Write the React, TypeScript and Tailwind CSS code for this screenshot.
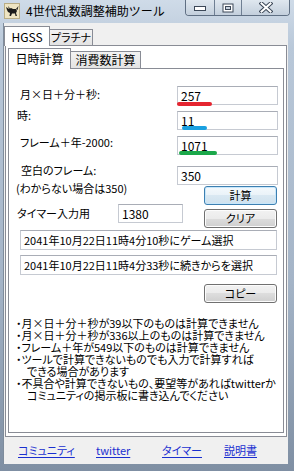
import React from "react";

const font = "font-['Noto_Sans_CJK_JP','Noto_Sans',sans-serif]";
const palt = "[font-feature-settings:'palt']";

function TextBox({ value, small = false, className = "" }: { value: string; small?: boolean; className?: string }) {
  return (
    <div
      className={`flex h-[19px] items-center whitespace-nowrap border border-[#c6cad2] border-t-[#a9adb6] bg-white pl-[3px] leading-none text-black ${
        small ? "text-[11px]" : "text-[12px]"
      } ${className}`}
    >
      {value}
    </div>
  );
}

function Btn({ label, primary = false, className = "" }: { label: string; primary?: boolean; className?: string }) {
  return (
    <div
      className={`flex h-[19px] w-[73px] items-center justify-center rounded-[3px] border text-[11px] leading-none text-black ${palt} ${
        primary
          ? "border-[#3c7fb1] bg-[linear-gradient(#f4f9fc_0%,#e9f2f8_50%,#d9e8f2_50%,#cfe1ee_100%)] shadow-[inset_0_0_0_1px_#c7e6fa]"
          : "border-[#707070] bg-[linear-gradient(#f2f2f2_0%,#ebebeb_50%,#dddddd_50%,#cfcfcf_100%)] shadow-[inset_0_0_0_1px_#fcfcfc]"
      } ${className}`}
    >
      {label}
    </div>
  );
}

function Underline({ color, className }: { color: string; className: string }) {
  return <div className={`absolute h-[4px] rounded-full ${color} ${className}`} />;
}

function AppIcon() {
  return (
    <svg width="16" height="16" viewBox="0 0 16 16">
      <rect x="0.5" y="0.5" width="15" height="15" fill="#eee4c2" stroke="#b9ad86" />
      <path
        d="M2 4 L5 6 L7 5 L9 6 L12 6 L13 8 L12 10 L13 13 L11.5 13 L11 10.5 L8 10.5 L7 13 L5.5 13 L6 10 L4 9 L3 7 Z"
        fill="#1b1b1b"
      />
      <path d="M4 3 L6 5.5 L5 6 Z" fill="#1b1b1b" />
      <path d="M12 6 L14.5 3 L13.5 7 Z" fill="#1b1b1b" />
    </svg>
  );
}

function CaptionButtons() {
  return (
    <div className="mr-[4px] flex h-[16px] self-start overflow-hidden rounded-b-[4px] border border-t-0 border-[#5f6f83] shadow-[inset_0_0_0_1px_rgba(255,255,255,0.45)]">
      <div className="flex w-[29px] items-center justify-center border-r border-[#6f7f93] bg-[linear-gradient(#dfe7ef,#c3cfdc)]">
        <svg width="12" height="6" viewBox="0 0 12 6">
          <rect x="0.5" y="1.5" width="11" height="4" fill="#fff" stroke="#3c4858" />
        </svg>
      </div>
      <div className="flex w-[27px] items-center justify-center border-r border-[#6f7f93] bg-[linear-gradient(#dfe7ef,#c3cfdc)]">
        <svg width="12" height="10" viewBox="0 0 12 10">
          <rect x="0.5" y="0.5" width="11" height="9" fill="#3c4858" />
          <rect x="1.5" y="1.5" width="9" height="7" fill="#fff" />
          <rect x="3.5" y="3.5" width="5" height="3" fill="#c9d3df" stroke="#3c4858" />
        </svg>
      </div>
      <div className="flex w-[47px] items-center justify-center bg-[linear-gradient(#dfe7ef,#c3cfdc)]">
        <svg width="14" height="11" viewBox="0 0 14 11">
          <path d="M2.5 1.5 L11.5 9.5 M11.5 1.5 L2.5 9.5" stroke="#3c4858" strokeWidth="4" strokeLinecap="square" />
          <path d="M2.5 1.5 L11.5 9.5 M11.5 1.5 L2.5 9.5" stroke="#fff" strokeWidth="2" strokeLinecap="square" />
        </svg>
      </div>
    </div>
  );
}

const notes: { text: string; indent?: boolean }[] = [
  { text: "・月×日＋分＋秒が39以下のものは計算できません" },
  { text: "・月×日＋分＋秒が336以上のものは計算できません" },
  { text: "・フレーム＋年が549以下のものは計算できません" },
  { text: "・ツールで計算できないものでも入力で計算すれば" },
  { text: "できる場合があります", indent: true },
  { text: "・不具合や計算できないもの、要望等があればtwitterか" },
  { text: "コミュニティの掲示板に書き込んでください", indent: true },
];

export default function App() {
  return (
    <div
      className={`flex h-[471px] w-[294px] flex-col overflow-hidden bg-[linear-gradient(180deg,#cfdbe8_0%,#b9c8d9_10%,#a4b4c7_60%,#7f8fa3_100%)] ${font}`}
    >
      {/* title bar */}
      <div className="flex h-[23px] shrink-0 items-start">
        <div className="ml-[4px] mt-[3px]">
          <AppIcon />
        </div>
        <div className="ml-[6px] mt-[3px] text-[12px] leading-[16px] text-black">4世代乱数調整補助ツール</div>
        <div className="ml-auto flex">
          <CaptionButtons />
        </div>
      </div>

      {/* client area */}
      <div className="mb-[7px] ml-[3px] mr-[6px] flex flex-1 flex-col border-l border-[#7e8c9c] bg-[#f0f0f0]">
        {/* outer tabs */}
        <div className="flex h-[22px] items-end">
          <div className="z-10 -mb-px flex h-[20px] w-[46px] items-center justify-center border border-b-0 border-[#898c95] bg-white text-[12px] leading-none text-black">
            HGSS
          </div>
          <div
            className={`flex h-[16px] w-[43px] items-center justify-center border border-b-0 border-l-0 border-[#898c95] bg-[linear-gradient(#f3f3f3,#e3e3e3)] text-[11px] leading-none text-black ${palt}`}
          >
            プラチナ
          </div>
        </div>

        {/* outer panel */}
        <div className="ml-px mr-[1px] flex h-[392px] flex-col border border-[#898c95] bg-white px-[2px] pb-[3px]">
          {/* inner tabs */}
          <div className="flex h-[22px] items-end">
            <div className="z-10 -mb-px flex h-[21px] w-[63px] items-center justify-center border border-b-0 border-[#898c95] bg-white text-[12px] leading-none text-black">
              日時計算
            </div>
            <div className="flex h-[17px] w-[70px] items-center justify-center border border-b-0 border-l-0 border-[#898c95] bg-[linear-gradient(#f3f3f3,#e3e3e3)] text-[12px] leading-none text-black">
              消費数計算
            </div>
          </div>

          {/* inner panel */}
          <div className={`flex flex-1 flex-col border border-[#898c95] bg-white pr-[5px] pt-[17px] text-[11px] leading-[14px] text-black ${palt}`}>
            <div className="flex items-start">
              <div className="ml-[11px] mt-[1px]">月×日＋分＋秒:</div>
              <div className="relative ml-auto">
                <TextBox value="257" className="w-[101px]" />
                <Underline color="bg-[#e52530]" className="left-0 top-[16px] w-[35px]" />
              </div>
            </div>
            <div className="mt-[6px] flex items-start">
              <div className="-mt-[3px] ml-[8px]">時:</div>
              <div className="relative ml-auto">
                <TextBox value="11" className="w-[101px]" />
                <Underline color="bg-[#1aa0e0]" className="left-[5px] top-[15px] w-[25px]" />
              </div>
            </div>
            <div className="mt-[6px] flex items-start">
              <div className="-mt-[1px] ml-[11px]">フレーム＋年-2000:</div>
              <div className="relative ml-auto">
                <TextBox value="1071" className="w-[101px]" />
                <Underline color="bg-[#1ba84a]" className="left-[2px] top-[15px] w-[38px]" />
              </div>
            </div>
            <div className="mt-[11px] flex items-start">
              <div className="-mt-[3px] ml-[12px]">空白のフレーム:</div>
              <TextBox value="350" className="ml-auto w-[101px]" />
            </div>

            <div className="flex items-start">
              <div className="flex flex-col">
                <div className="-mt-[4px] ml-[7px]">(わからない場合は350)</div>
                <div className="mt-[9px] flex items-start">
                  <div className="ml-[8px] mt-[2px] w-[101px]">タイマー入力用</div>
                  <TextBox value="1380" className="w-[65px]" />
                </div>
              </div>
              <div className="ml-auto mr-px mt-px flex flex-col">
                <Btn label="計算" primary />
                <Btn label="クリア" className="mt-[4px]" />
              </div>
            </div>

            <TextBox small value="2041年10月22日11時4分10秒にゲーム選択" className="ml-[11px] mr-px mt-[2px] h-[20px]" />
            <TextBox small value="2041年10月22日11時4分33秒に続きからを選択" className="ml-[11px] mr-px mt-[5px] h-[20px]" />
            <Btn label="コピー" className="mr-px mt-[9px] self-end" />

            <div className="ml-[7px] mt-[14px] flex flex-col whitespace-nowrap leading-[12px]">
              {notes.map((n, i) => (
                <div key={i} className={n.indent ? "pl-[11px]" : ""}>
                  {n.text}
                </div>
              ))}
            </div>
          </div>
        </div>

        {/* links */}
        <div className={`flex flex-1 items-center pl-[14px] text-[11px] leading-none text-[#1a2fd0] ${palt}`}>
          <div className="w-[78px]">
            <span className="underline underline-offset-2">コミュニティ</span>
          </div>
          <div className="w-[66px]">
            <span className="underline underline-offset-2">twitter</span>
          </div>
          <div className="w-[62px]">
            <span className="underline underline-offset-2">タイマー</span>
          </div>
          <div>
            <span className="underline underline-offset-2">説明書</span>
          </div>
        </div>
      </div>
    </div>
  );
}
